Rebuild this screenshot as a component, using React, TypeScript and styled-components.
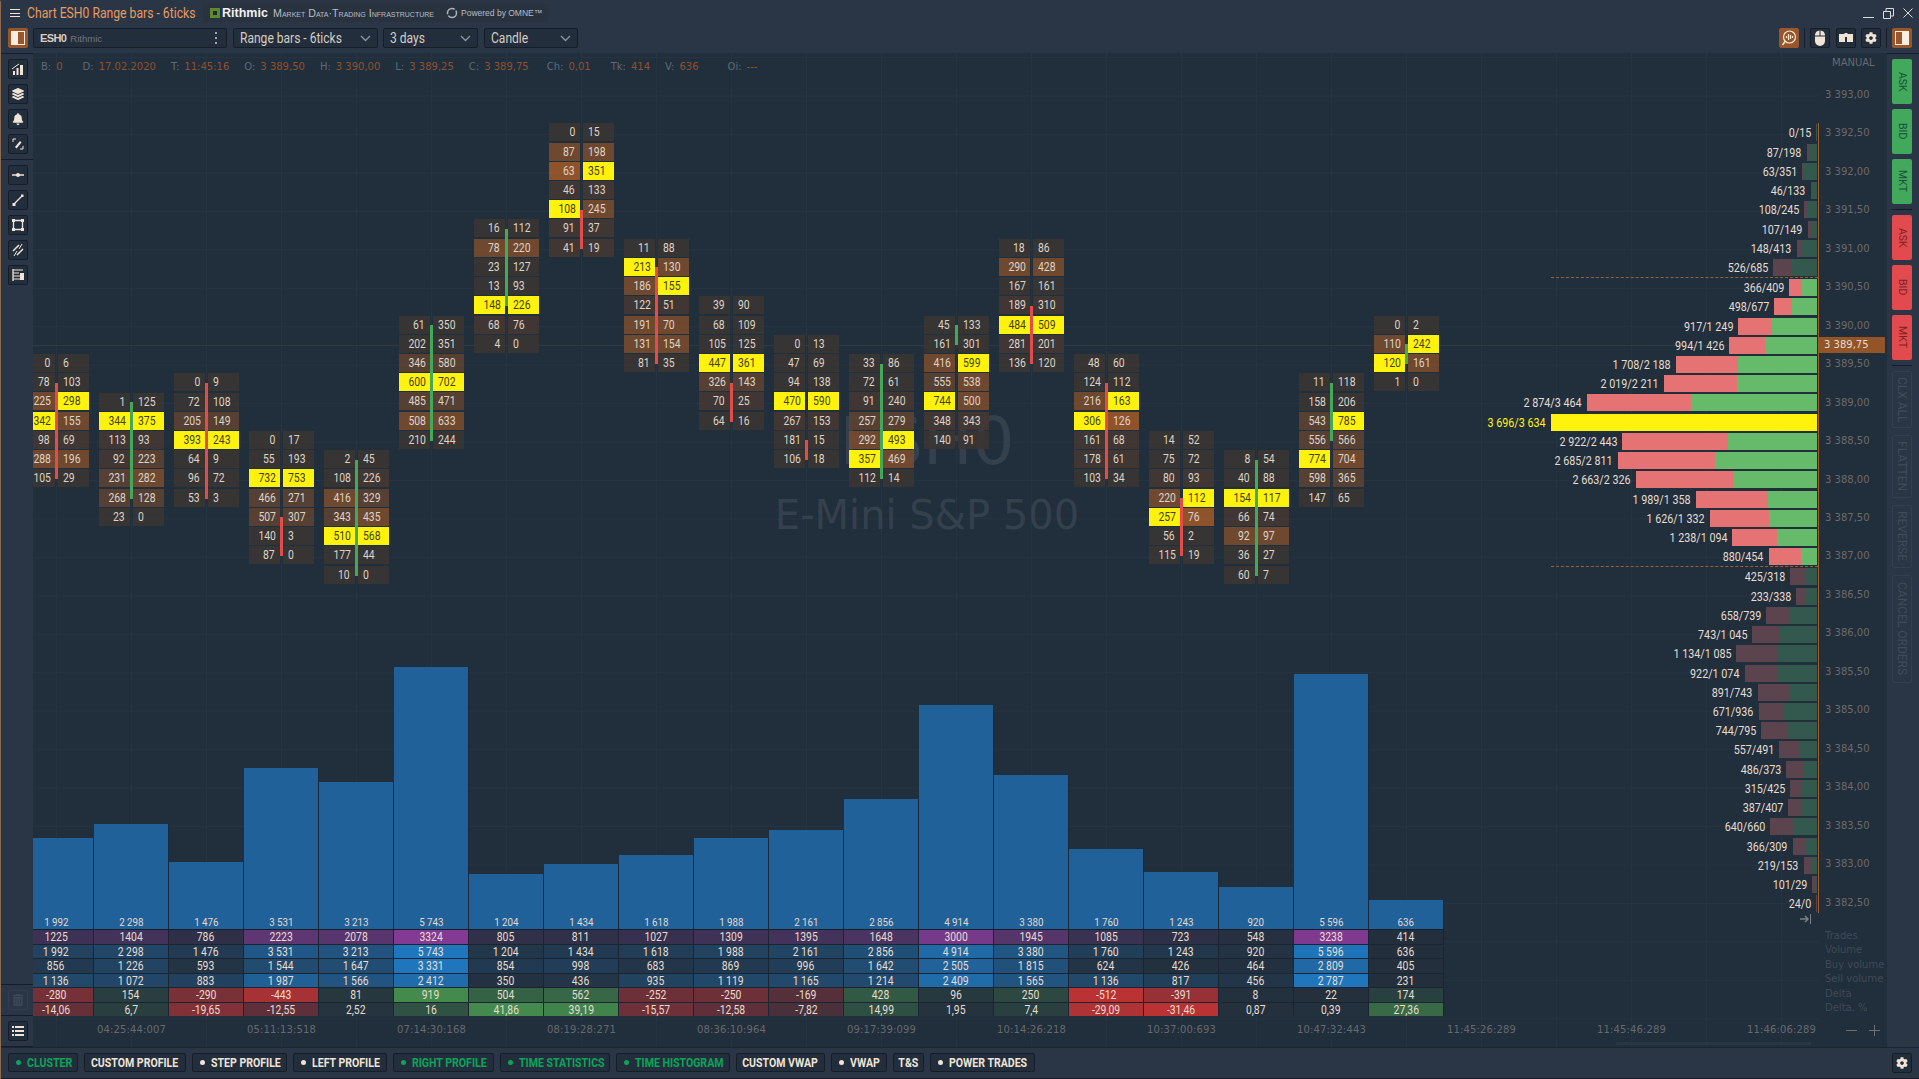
import * as React from 'react';
import styled, { createGlobalStyle } from 'styled-components';
import { FaBell, FaCog, FaLayerGroup, FaTrashAlt } from 'react-icons/fa';

const narrow = 'Roboto, "Liberation Sans", sans-serif';
const wide = '"DejaVu Sans", Verdana, sans-serif';

const PRICE_STEP = 19.23;
const CREAM = '#efe3d6';

const GlobalStyle = createGlobalStyle`
    html, body {
        margin: 0;
        padding: 0;
        background: #212e3c;
        overflow: hidden;
    }
    * {
        box-sizing: border-box;
    }
`;

const Window = styled.div`
    width: 1919px;
    height: 1079px;
    display: flex;
    flex-direction: column;
    overflow: hidden;
    background: #2a3645;
    border-top: 2px solid #2a3645;
    border-left: 1px solid #8a6a52;
    position: relative;
    font-family: ${narrow};
    &::before {
        content: '';
        position: absolute;
        left: 0;
        right: 0;
        top: -1px;
        height: 1px;
        background: #8a6a52;
    }
`;

// the reference uses a condensed face that is not installed, so Roboto is squeezed sideways
const Squeeze = styled.span<{ $from?: 'left' | 'right' | 'center'; $x?: number }>`
    display: inline-block;
    white-space: nowrap;
    transform: scaleX(${p => p.$x || 0.83});
    transform-origin: ${p => p.$from || 'center'} center;
`;

const Header = styled.div`
    height: 51px;
    flex: none;
    display: flex;
    flex-direction: column;
`;

const TitleRow = styled.div`
    height: 22px;
    flex: none;
    display: flex;
    align-items: center;
    padding-left: 9px;
`;

const Burger = styled.div`
    width: 10px;
    height: 8px;
    border-top: 1px solid ${CREAM};
    border-bottom: 1px solid ${CREAM};
    position: relative;
    &::after {
        content: '';
        position: absolute;
        left: 0;
        right: 0;
        top: 2.5px;
        height: 1px;
        background: ${CREAM};
    }
`;

const Title = styled.div`
    margin-left: 7px;
    width: 176px;
    font-size: 14px;
    color: #e89a62;
    white-space: nowrap;
`;

const Banner = styled.div`
    width: 345px;
    height: 18px;
    display: flex;
    align-items: center;
    background: #293340;
    border-radius: 2px;
    padding-left: 7px;
    color: #b7bdc4;
    white-space: nowrap;
    font-family: "Liberation Sans", sans-serif;
`;

const BannerBrand = styled.span`
    font-weight: 700;
    font-size: 12.5px;
    color: #f2f2f2;
    margin-left: 2px;
    width: 51px;
`;

const BannerSmall = styled.span`
    font-variant: small-caps;
    font-size: 10.7px;
    width: 173px;
`;

const BannerPower = styled.span`
    font-size: 8.5px;
    margin-left: 3px;
`;

const WindowControls = styled.div`
    margin-left: auto;
    display: flex;
    align-items: center;
    gap: 9px;
    padding-right: 6px;
    svg {
        display: block;
    }
`;

const ToolRow = styled.div`
    flex: 1;
    display: flex;
    align-items: flex-start;
    padding: 4px 0 0 7px;
`;

const Toggle = styled.div<{ $mirror?: boolean }>`
    width: 20px;
    height: 20px;
    background: #97562b;
    border-radius: 2px;
    flex: none;
    display: flex;
    align-items: center;
    justify-content: center;
    &::after {
        content: '';
        width: 12px;
        height: 12px;
        border: 1px solid #fbeee0;
        background: ${p => p.$mirror
            ? 'linear-gradient(90deg, #97562b 50%, #fbeee0 50%)'
            : 'linear-gradient(90deg, #fbeee0 50%, #97562b 50%)'};
    }
`;

const Box = styled.div<{ $w: number; $ml: number }>`
    width: ${p => p.$w}px;
    margin-left: ${p => p.$ml}px;
    height: 20px;
    flex: none;
    display: flex;
    align-items: center;
    padding: 0 6px;
    background: #222e3c;
    border: 1px solid #151e28;
    border-radius: 2px;
    color: #d8cdc0;
    font-size: 14px;
    white-space: nowrap;
`;

const Symbol = styled.span`
    font-size: 11px;
    font-weight: 700;
    letter-spacing: -0.6px;
    font-family: "Liberation Sans", sans-serif;
    color: #d8cdc0;
`;

const Feed = styled.span`
    font-size: 9.5px;
    margin-left: 4px;
    color: #6d7681;
    flex: 1;
    font-family: "Liberation Sans", sans-serif;
`;

const Chevron = styled.svg`
    margin-left: auto;
    flex: none;
`;

const Dots = styled.div`
    width: 2px;
    height: 12px;
    margin-right: 3px;
    background: repeating-linear-gradient(#a0a6ad 0 2px, transparent 2px 5px);
`;

const ToolGroup = styled.div`
    margin-left: auto;
    padding-right: 7px;
    display: flex;
    align-items: flex-start;
`;

const Divider = styled.div`
    width: 1px;
    height: 20px;
    background: #151e28;
    margin: 0 5px;
`;

const ToolGap = styled.div<{ $w: number }>`
    width: ${p => p.$w}px;
    flex: none;
`;

const IconButton = styled.div<{ $brown?: boolean; $dim?: boolean }>`
    width: 20px;
    height: 20px;
    flex: none;
    display: flex;
    align-items: center;
    justify-content: center;
    background: ${p => (p.$brown ? '#97562b' : p.$dim ? 'transparent' : '#222e3c')};
    border: 1px solid ${p => (p.$brown ? '#97562b' : p.$dim ? '#323f4e' : '#151e28')};
    border-radius: 2px;
    color: ${p => (p.$dim ? '#3c4855' : '#f1e4d6')};
    font-size: 12px;
`;

const Body = styled.div`
    height: 994px;
    flex: none;
    display: flex;
`;

const Rail = styled.div`
    width: 32px;
    flex: none;
    display: flex;
    flex-direction: column;
    border-top: 1px solid #151e28;
`;

const RailGroup = styled.div<{ $border?: boolean }>`
    display: flex;
    flex-direction: column;
    gap: 5px;
    padding: 5px 0 5px 7px;
    border-bottom: ${p => (p.$border ? '1px solid #151e28' : 'none')};
`;

const RailSpacer = styled.div`
    flex: 1;
    border-bottom: 1px solid #151e28;
`;

const Main = styled.div`
    width: 1786px;
    flex: none;
    display: flex;
    flex-direction: column;
    position: relative;
    overflow: hidden;
    background-color: #212e3c;
    background-image:
        linear-gradient(#2f3a44, #2f3a44),
        linear-gradient(90deg, #263340 1px, transparent 1px),
        linear-gradient(#263340 1px, transparent 1px);
    background-repeat: no-repeat, repeat, repeat;
    background-size: 100% 1px, 75px 100%, 100% 38.46px;
    background-position: 0 292px, 23px 0, 0 4px;
`;

const Watermark = styled.div`
    position: absolute;
    left: 0;
    right: 0;
    top: 356px;
    width: 1788px;
    text-align: center;
    font-family: ${wide};
    color: #35404d;
    line-height: 1;
`;

const WatermarkBig = styled.div`
    font-size: 66px;
`;

const WatermarkSmall = styled.div`
    font-size: 40px;
    margin-top: 20px;
`;

const InfoBar = styled.div`
    height: 70.3px;
    flex: none;
    display: flex;
    align-items: flex-start;
    gap: 15px;
    padding: 7px 0 0 8px;
    font-family: ${wide};
    font-size: 10px;
    line-height: 14px;
    white-space: nowrap;
    position: relative;
`;

const InfoItem = styled.div<{ $extra?: number }>`
    margin-right: ${p => p.$extra || 0}px;
    color: #5c6a79;
    span {
        color: #8d5230;
        margin-left: 5px;
    }
`;

const ChartBody = styled.div`
    flex: 1;
    display: flex;
    min-height: 0;
    position: relative;
`;

const LeftPane = styled.div`
    width: 1411px;
    flex: none;
    display: flex;
    flex-direction: column;
    overflow: hidden;
`;

const ClusterRow = styled.div`
    flex: 1;
    min-height: 0;
    display: flex;
    margin-left: -14px;
`;

const ClusterColumn = styled.div<{ $start: number }>`
    width: 75px;
    flex: none;
    align-self: flex-start;
    margin-top: ${p => p.$start * PRICE_STEP}px;
    padding: 0 5px;
    display: grid;
    grid-template-columns: 31px 31px;
    grid-auto-rows: 18px;
    column-gap: 3px;
    row-gap: ${PRICE_STEP - 18}px;
    position: relative;
`;

const Cell = styled.div<{ $level: number; $side: 'l' | 'r' }>`
    background: ${p => (p.$level === 9 ? '#fff30d' : ['#3a3533ea', '#443833ea', '#5b4232ea', '#774b2fea', '#96562bf0'][p.$level])};
    color: ${p => (p.$level === 9 ? '#3f3f18' : '#ddd3c7')};
    font-size: 13px;
    line-height: 18px;
    text-align: ${p => (p.$side === 'l' ? 'right' : 'left')};
    padding: 0 5px;
    white-space: nowrap;
`;

const Wick = styled.div<{ $from: number; $to: number; $up: boolean }>`
    position: absolute;
    left: 36px;
    width: 3px;
    top: ${p => p.$from * PRICE_STEP + 9.5}px;
    height: ${p => (p.$to - p.$from) * PRICE_STEP + 0.5}px;
    background: ${p => (p.$up ? '#43a85a' : '#e14d4d')};
`;

const VolumeRow = styled.div`
    height: 263px;
    flex: none;
    display: flex;
    align-items: flex-end;
    margin-left: -14px;
    border-bottom: 1px solid #16202b;
`;

const VolumeBar = styled.div<{ $h: number }>`
    width: 75px;
    flex: none;
    height: ${p => p.$h}px;
    border-right: 1px solid #1b2a3a;
    background: #21619a;
    display: flex;
    align-items: flex-end;
    justify-content: center;
    color: #e2d8cc;
    font-size: 11.5px;
    line-height: 14px;
`;

const StatsTable = styled.div`
    flex: none;
    margin-left: -14px;
    display: grid;
    grid-template-columns: repeat(19, 74px);
    grid-auto-rows: 13.5px;
    gap: 1px;
    background: #1a2531;
    height: 86px;
    width: 1425px;
`;

const StatCell = styled.div<{ $bg: string }>`
    background: ${p => p.$bg};
    color: #e6dccf;
    font-size: 12.5px;
    line-height: 13.5px;
    text-align: center;
    white-space: nowrap;
`;

const Profile = styled.div`
    flex: 1;
    display: flex;
    flex-direction: column;
    align-items: stretch;
`;

const ProfileRows = styled.div`
    display: flex;
    flex-direction: column;
    align-items: stretch;
    border-right: 1px solid #a0592a;
    padding-right: 1px;
`;

const ProfileRow = styled.div<{ $poc?: boolean }>`
    height: ${PRICE_STEP}px;
    display: flex;
    justify-content: flex-end;
    align-items: center;
    gap: 5px;
    font-size: 12.5px;
    color: ${p => (p.$poc ? '#fff30d' : '#e6dccf')};
    white-space: nowrap;
`;

const DashLine = styled.div`
    height: 0;
    width: 267px;
    align-self: flex-end;
    margin-right: -1px;
    border-top: 1px dashed #95603c;
`;

const ProfileBar = styled.div`
    height: 17px;
    display: flex;
    flex: none;
`;

const EndMark = styled.div`
    align-self: flex-end;
    margin: 0 8px 0 0;
    height: 12px;
    display: flex;
    align-items: center;
`;

const TimeAxis = styled.div`
    height: 31px;
    flex: none;
    display: flex;
    padding-left: 23.5px;
    position: relative;
`;

const TimeLabel = styled.div`
    width: 150px;
    flex: none;
    text-align: center;
    font-family: ${wide};
    font-size: 10px;
    letter-spacing: 0.15px;
    line-height: 28px;
    color: #666a6e;
`;

const ScrollThumb = styled.div`
    position: absolute;
    left: 1583px;
    width: 195px;
    bottom: 2px;
    height: 3px;
    background: #2a3645;
`;

const Axis = styled.div`
    width: 68px;
    flex: none;
    display: flex;
    flex-direction: column;
    position: relative;
    background: #212e3c;
    font-family: ${wide};
    font-size: 10px;
`;

const AxisMode = styled.div`
    height: 23px;
    flex: none;
    padding: 3px 0 0 13px;
    line-height: 14px;
    color: #666a6e;
`;

const PriceLabel = styled.div`
    height: 38.46px;
    flex: none;
    line-height: 38.46px;
    padding-left: 6px;
    color: #6d6a67;
    white-space: nowrap;
`;

const PriceTag = styled.div`
    position: absolute;
    left: 0;
    top: 284px;
    width: 66px;
    height: 16px;
    padding-left: 5px;
    line-height: 16px;
    background: #935428;
    color: #e6dccf;
`;

const AxisStats = styled.div`
    margin-top: 7px;
    display: grid;
    grid-auto-rows: 14.5px;
`;

const AxisStat = styled.div`
    padding-left: 6px;
    line-height: 14.5px;
    color: #3f4a55;
    white-space: nowrap;
`;

const Zoomers = styled.div`
    margin-top: 6px;
    padding: 0 7px 0 27px;
    display: flex;
    justify-content: space-between;
    align-items: center;
    height: 18px;
`;

const TradePanel = styled.div`
    flex: 1;
    display: flex;
    flex-direction: column;
    align-items: flex-start;
    padding: 5px 0 0 5px;
    border-top: 1px solid #151e28;
`;

const TradeButton = styled.div<{ $kind: 'buy' | 'sell' | 'idle'; $h: number }>`
    width: 20px;
    height: ${p => p.$h}px;
    flex: none;
    margin-bottom: ${p => (p.$kind === 'idle' ? 7 : 5)}px;
    border-radius: 2px;
    display: flex;
    align-items: center;
    justify-content: center;
    writing-mode: vertical-rl;
    white-space: nowrap;
    font-family: Roboto, sans-serif;
    font-size: ${p => (p.$kind === 'idle' ? 12 : 10.5)}px;
    background: ${p => (p.$kind === 'buy' ? '#42a85c' : p.$kind === 'sell' ? '#e24a4d' : 'transparent')};
    border: ${p => (p.$kind === 'idle' ? '1px solid #323f4e' : 'none')};
    color: ${p => (p.$kind === 'buy' ? '#17503a' : p.$kind === 'sell' ? '#7a2329' : '#3f4b58')};
`;

const TradeRule = styled.div`
    width: 20px;
    height: 1px;
    background: #151e28;
    flex: none;
    margin-bottom: 5px;
`;

const Footer = styled.div`
    flex: 1;
    display: flex;
    align-items: flex-start;
    gap: 6px;
    padding: 5px 7px 0 7px;
    border-top: 1px solid #1b2530;
    border-bottom: 1px solid #151e28;
    position: relative;
`;

const Chip = styled.div<{ $on?: boolean; $dot?: boolean; $w: number }>`
    width: ${p => p.$w}px;
    height: 19px;
    flex: none;
    display: flex;
    align-items: center;
    justify-content: ${p => (p.$dot ? 'flex-start' : 'center')};
    gap: 6px;
    padding-left: ${p => (p.$dot ? 7 : 0)}px;
    background: #222e3c;
    border: 1px solid #151e28;
    border-radius: 2px;
    color: ${p => (p.$on ? '#0ba45a' : CREAM)};
    font-size: 12px;
    font-weight: 700;
    white-space: nowrap;
    &::before {
        content: '';
        display: ${p => (p.$dot ? 'block' : 'none')};
        flex: none;
        width: 5px;
        height: 5px;
        border-radius: 50%;
        background: currentColor;
    }
`;

const FooterEnd = styled.div`
    margin-left: auto;
`;

const chevron = (
    <Chevron width="11" height="7" viewBox="0 0 11 7">
        <path d="M1 1l4.5 4.5L10 1" fill="none" stroke="#8c97a3" strokeWidth="1.3" />
    </Chevron>
);

const glyph = (children: React.ReactNode) => (
    <svg width="14" height="14" viewBox="0 0 14 14" fill="#f1e4d6" stroke="#f1e4d6">
        {children}
    </svg>
);

const railTop = [
    glyph(<g stroke="none"><path d="M2 9h2v4H2zM5.500 6h2v7h-2zM9 3h3v10H9z" /><path d="M1 7l4-3 3-2" fill="none" stroke="#f1e4d6" /></g>),
    <FaLayerGroup key="l" />,
    <FaBell key="b" />,
    glyph(<g><path d="M4 10l5-6 1.500 1.500-5 6z" stroke="none" /><path d="M2 5V2h3M12 9v3H9" fill="none" /></g>),
];

const railDraw = [
    glyph(<g><path d="M1 7h12" strokeWidth="1.5" /><circle cx="7" cy="7" r="2" stroke="none" /></g>),
    glyph(<g><path d="M3 11l8-8" strokeWidth="1.300" /><path d="M1.500 10h3v3h-3zM10 1.500h2.500v2.500H10z" stroke="none" /></g>),
    glyph(<g><path d="M2.500 2.500h9v9h-9z" fill="none" strokeWidth="1.300" /><path d="M1 1h3v3H1zM10 1h3v3h-3zM1 10h3v3H1zM10 10h3v3h-3z" stroke="none" /></g>),
    glyph(<g><path d="M2 8l6-6M6 12l6-6" strokeWidth="1.500" /><path d="M3 13l3-5M8 6l3-5" strokeWidth="1" /></g>),
    glyph(<g><path d="M2 1v12" strokeWidth="1.300" /><path d="M2 2h10M2 5h6M2 8h10M2 11h7" fill="none" /><path d="M9 5h4v7H9z" stroke="none" /></g>),
];

const listIcon = (
    <svg width="12" height="10" viewBox="0 0 12 10" fill="#f1e4d6">
        <path d="M0 0h2v2H0zM3 0h9v2H3zM0 4h2v2H0zM3 4h9v2H3zM0 8h2v2H0zM3 8h9v2H3z" />
    </svg>
);

const topIcons = {
    chat: (
        <svg width="16" height="16" viewBox="0 0 16 16" fill="none" stroke="#f7ead9">
            <circle cx="8.500" cy="7" r="6" strokeWidth="1.200" />
            <path d="M4 11.500L1.500 15" strokeWidth="1.500" />
            <path d="M5.500 8V6M7.500 10V4M9.500 9V5M11.500 8V6" strokeWidth="1.200" />
        </svg>
    ),
    mouse: (
        <svg width="12" height="16" viewBox="0 0 12 16" fill="#f1e4d6">
            <path d="M1 6.500h10V11a5 5 0 0 1-10 0zM1 5.500V5a5 5 0 0 1 4.500-4.500v5zM6.500.5A5 5 0 0 1 11 5v.5H6.500z" />
        </svg>
    ),
    split: (
        <svg width="14" height="10" viewBox="0 0 14 10" fill="#f1e4d6">
            <path d="M0 1h6v8H0zM8 1h6v8H8zM5.500 0h3v4h-3z" />
        </svg>
    ),
};

const ringIcon = (
    <svg width="12" height="12" viewBox="0 0 12 12" fill="none" stroke="#aeb5bd" strokeWidth="1.500">
        <circle cx="6" cy="6" r="4.500" strokeDasharray="11 1.500" />
    </svg>
);

const brandIcon = (
    <svg width="10" height="10" viewBox="0 0 10 10">
        <path d="M0 0h10v10H0z" fill="#5d8a2c" />
        <path d="M3 3h4v4H3z" fill="#202a36" />
    </svg>
);

const clusters: { start: number; up: boolean; wick: [number, number]; rows: number[][] }[] = [
    { start: 12, up: false, wick: [1, 6], rows: [[0, 6, 0, 0], [78, 103, 0, 0], [225, 298, 3, 9], [342, 155, 9, 3], [98, 69, 1, 1], [288, 196, 3, 3], [105, 29, 0, 0]] },
    { start: 14, up: true, wick: [0, 5], rows: [[1, 125, 0, 0], [344, 375, 9, 9], [113, 93, 1, 1], [92, 223, 1, 2], [231, 282, 2, 3], [268, 128, 2, 2], [23, 0, 0, 0]] },
    { start: 13, up: false, wick: [0, 6], rows: [[0, 9, 0, 0], [72, 108, 0, 0], [205, 149, 2, 2], [393, 243, 9, 9], [64, 9, 0, 0], [96, 72, 0, 0], [53, 3, 0, 0]] },
    { start: 16, up: false, wick: [4, 6], rows: [[0, 17, 0, 0], [55, 193, 0, 0], [732, 753, 9, 9], [466, 271, 2, 2], [507, 307, 2, 2], [140, 3, 0, 0], [87, 0, 0, 0]] },
    { start: 17, up: true, wick: [0, 6], rows: [[2, 45, 0, 0], [108, 226, 0, 1], [416, 329, 3, 2], [343, 435, 2, 3], [510, 568, 9, 9], [177, 44, 0, 0], [10, 0, 0, 0]] },
    { start: 10, up: true, wick: [0, 6], rows: [[61, 350, 0, 0], [202, 351, 0, 0], [346, 580, 2, 2], [600, 702, 9, 9], [485, 471, 2, 2], [508, 633, 3, 3], [210, 244, 0, 0]] },
    { start: 5, up: true, wick: [0, 4], rows: [[16, 112, 0, 0], [78, 220, 3, 3], [23, 127, 0, 0], [13, 93, 0, 0], [148, 226, 9, 9], [68, 76, 1, 1], [4, 0, 0, 0]] },
    { start: 0, up: false, wick: [4, 6], rows: [[0, 15, 0, 0], [87, 198, 3, 3], [63, 351, 4, 9], [46, 133, 1, 1], [108, 245, 9, 3], [91, 37, 1, 1], [41, 19, 1, 1]] },
    { start: 6, up: false, wick: [1, 6], rows: [[11, 88, 0, 0], [213, 130, 9, 3], [186, 155, 3, 9], [122, 51, 1, 1], [191, 70, 3, 3], [131, 154, 3, 3], [81, 35, 0, 0]] },
    { start: 9, up: false, wick: [4, 6], rows: [[39, 90, 0, 0], [68, 109, 0, 0], [105, 125, 0, 0], [447, 361, 9, 9], [326, 143, 2, 2], [70, 25, 1, 1], [64, 16, 0, 0]] },
    { start: 11, up: false, wick: [5, 6], rows: [[0, 13, 0, 0], [47, 69, 0, 0], [94, 138, 0, 0], [470, 590, 9, 9], [267, 153, 1, 1], [181, 15, 0, 0], [106, 18, 0, 0]] },
    { start: 12, up: true, wick: [0, 6], rows: [[33, 86, 0, 0], [72, 61, 0, 0], [91, 240, 1, 1], [257, 279, 2, 2], [292, 493, 3, 9], [357, 469, 9, 3], [112, 14, 0, 0]] },
    { start: 10, up: true, wick: [0, 1], rows: [[45, 133, 0, 0], [161, 301, 0, 0], [416, 599, 3, 9], [555, 538, 2, 3], [744, 500, 9, 3], [348, 343, 1, 1], [140, 91, 0, 0]] },
    { start: 6, up: false, wick: [3, 6], rows: [[18, 86, 0, 0], [290, 428, 3, 3], [167, 161, 0, 0], [189, 310, 1, 1], [484, 509, 9, 9], [281, 201, 1, 1], [136, 120, 0, 0]] },
    { start: 12, up: false, wick: [1, 6], rows: [[48, 60, 0, 0], [124, 112, 0, 0], [216, 163, 3, 9], [306, 126, 9, 4], [161, 68, 1, 1], [178, 61, 1, 1], [103, 34, 0, 0]] },
    { start: 16, up: false, wick: [3, 6], rows: [[14, 52, 0, 0], [75, 72, 0, 0], [80, 93, 1, 1], [220, 112, 3, 9], [257, 76, 9, 4], [56, 2, 0, 0], [115, 19, 0, 0]] },
    { start: 17, up: true, wick: [0, 6], rows: [[8, 54, 0, 0], [40, 88, 0, 0], [154, 117, 9, 9], [66, 74, 1, 1], [92, 97, 3, 3], [36, 27, 0, 0], [60, 7, 0, 0]] },
    { start: 13, up: true, wick: [0, 3], rows: [[11, 118, 0, 0], [158, 206, 0, 0], [543, 785, 2, 9], [556, 566, 2, 2], [774, 704, 9, 3], [598, 365, 2, 2], [147, 65, 0, 0]] },
    { start: 10, up: true, wick: [1, 2], rows: [[0, 2, 0, 0], [110, 242, 3, 9], [120, 161, 9, 3], [1, 0, 0, 0]] },
];

const trades = [1225, 1404, 786, 2223, 2078, 3324, 805, 811, 1027, 1309, 1395, 1648, 3000, 1945, 1085, 723, 548, 3238, 414];
const volumes = [1992, 2298, 1476, 3531, 3213, 5743, 1204, 1434, 1618, 1988, 2161, 2856, 4914, 3380, 1760, 1243, 920, 5596, 636];
const buys = [856, 1226, 593, 1544, 1647, 3331, 854, 998, 683, 869, 996, 1642, 2505, 1815, 624, 426, 464, 2809, 405];
const sells = [1136, 1072, 883, 1987, 1566, 2412, 350, 436, 935, 1119, 1165, 1214, 2409, 1565, 1136, 817, 456, 2787, 231];
const deltas = [-280, 154, -290, -443, 81, 919, 504, 562, -252, -250, -169, 428, 96, 250, -512, -391, 8, 22, 174];
const deltaPct = [-14.06, 6.7, -19.65, -12.55, 2.52, 16, 41.86, 39.19, -15.57, -12.58, -7.82, 14.99, 1.95, 7.4, -29.09, -31.46, 0.87, 0.39, 27.36];

const profile: [number, number][] = [
    [0, 15], [87, 198], [63, 351], [46, 133], [108, 245], [107, 149], [148, 413], [526, 685],
    [366, 409], [498, 677], [917, 1249], [994, 1426], [1708, 2188], [2019, 2211], [2874, 3464], [3696, 3634],
    [2922, 2443], [2685, 2811], [2663, 2326], [1989, 1358], [1626, 1332], [1238, 1094], [880, 454],
    [425, 318], [233, 338], [658, 739], [743, 1045], [1134, 1085], [922, 1074], [891, 743], [671, 936],
    [744, 795], [557, 491], [486, 373], [315, 425], [387, 407], [640, 660], [366, 309], [219, 153], [101, 29], [24, 0],
];

const prices = ['3 393,00', '3 392,50', '3 392,00', '3 391,50', '3 391,00', '3 390,50', '3 390,00', '3 389,50', '3 389,00', '3 388,50', '3 388,00', '3 387,50', '3 387,00', '3 386,50', '3 386,00', '3 385,50', '3 385,00', '3 384,50', '3 384,00', '3 383,50', '3 383,00', '3 382,50'];
const times = ['04:25:44:007', '05:11:13:518', '07:14:30:168', '08:19:28:271', '08:36:10:964', '09:17:39:099', '10:14:26:218', '10:37:00:693', '10:47:32:443', '11:45:26:289', '11:45:46:289', '11:46:06:289'];

const chips = [
    { t: 'CLUSTER', on: true, dot: true, w: 70 },
    { t: 'CUSTOM PROFILE', w: 102 },
    { t: 'STEP PROFILE', dot: true, w: 95 },
    { t: 'LEFT PROFILE', dot: true, w: 94 },
    { t: 'RIGHT PROFILE', on: true, dot: true, w: 101 },
    { t: 'TIME STATISTICS', on: true, dot: true, w: 110 },
    { t: 'TIME HISTOGRAM', on: true, dot: true, w: 114 },
    { t: 'CUSTOM VWAP', w: 89 },
    { t: 'VWAP', dot: true, w: 56 },
    { t: 'T&S', w: 31 },
    { t: 'POWER TRADES', dot: true, w: 105 },
];

const info = [
    ['B:', '0', 5], ['D:', '17.02.2020'], ['T:', '11:45:16'], ['O:', '3 389,50'], ['H:', '3 390,00'],
    ['L:', '3 389,25'], ['C:', '3 389,75', 3], ['Ch:', '0,01', 5], ['Tk:', '414'], ['V:', '636', 14], ['Oi:', '---'],
] as [string, string, number?][];

const group = (n: number) => String(n).replace(/\B(?=(\d{3})+$)/, ' ');
const comma = (n: number) => String(n).replace('.', ',');

const mix = (from: number[], to: number[], t: number) =>
    `rgb(${from.map((c, i) => Math.round(c + (to[i] - c) * t)).join(',')})`;

const BASE = [35, 47, 61];
const ramp = (values: number[], to: number[]) => {
    const min = Math.min(...values);
    const max = Math.max(...values);
    return values.map(v => mix(BASE, to, (v - min) / (max - min)));
};
const signed = (values: number[]) => {
    const top = Math.max(...values);
    const low = Math.min(...values);
    return values.map(v =>
        v >= 0 ? mix(BASE, [67, 138, 76], v / top) : mix(BASE, [186, 50, 52], v / low));
};

const statRows: { labels: string[]; colors: string[] }[] = [
    { labels: trades.map(String), colors: ramp(trades, [130, 58, 146]) },
    { labels: volumes.map(group), colors: ramp(volumes, [31, 118, 189]) },
    { labels: buys.map(group), colors: ramp(buys, [31, 118, 189]) },
    { labels: sells.map(group), colors: ramp(sells, [31, 118, 189]) },
    { labels: deltas.map(String), colors: signed(deltas) },
    { labels: deltaPct.map(comma), colors: signed(deltaPct) },
];

const PROFILE_SCALE = 266 / (3696 + 3634);

const profileBar = (ask: number, bid: number, index: number) => {
    const bright = index >= 8 && index <= 22;
    const total = (ask + bid) * PROFILE_SCALE;
    if (ask === 3696) {
        return <ProfileBar style={{ width: total, background: '#fff30d' }} />;
    }
    return (
        <ProfileBar style={{ width: total }}>
            <div style={{ width: ask * PROFILE_SCALE, background: bright ? '#e57373' : '#5b444e' }} />
            <div style={{ width: bid * PROFILE_SCALE, background: bright ? '#66bb6a' : '#33594e' }} />
        </ProfileBar>
    );
};

export default function App() {
    return (
        <Window>
            <GlobalStyle />
            <Header>
                <TitleRow>
                    <Burger />
                    <Title><Squeeze $from="left" $x={0.87}>Chart ESH0 Range bars - 6ticks</Squeeze></Title>
                    <Banner>
                        {brandIcon}
                        <BannerBrand>Rithmic</BannerBrand>
                        <BannerSmall>Market Data·Trading Infrastructure</BannerSmall>
                        {ringIcon}
                        <BannerPower>Powered by OMNE™</BannerPower>
                    </Banner>
                    <WindowControls>
                        <svg width="11" height="10" viewBox="0 0 11 10"><path d="M0 9.500h11" stroke="#d8dde2" /></svg>
                        <svg width="11" height="11" viewBox="0 0 11 11" fill="none" stroke="#d8dde2"><path d="M.5 3.500h7v7h-7zM3 3V.5h7.500V8H8" /></svg>
                        <svg width="10" height="10" viewBox="0 0 10 10" stroke="#d8dde2"><path d="M.5.5l9 9M9.500.5l-9 9" /></svg>
                    </WindowControls>
                </TitleRow>
                <ToolRow>
                    <Toggle />
                    <Box $w={194} $ml={5}>
                        <Symbol>ESH0</Symbol>
                        <Feed>Rithmic</Feed>
                        <Dots />
                    </Box>
                    <Box $w={145} $ml={6}><Squeeze $from="left" $x={0.86}>Range bars - 6ticks</Squeeze>{chevron}</Box>
                    <Box $w={95} $ml={5}><Squeeze $from="left" $x={0.86}>3 days</Squeeze>{chevron}</Box>
                    <Box $w={94} $ml={6}><Squeeze $from="left" $x={0.86}>Candle</Squeeze>{chevron}</Box>
                    <ToolGroup>
                        <IconButton $brown>{topIcons.chat}</IconButton>
                        <Divider />
                        <IconButton>{topIcons.mouse}</IconButton>
                        <ToolGap $w={6} />
                        <IconButton>{topIcons.split}</IconButton>
                        <ToolGap $w={5} />
                        <IconButton><FaCog /></IconButton>
                        <Divider />
                        <Toggle $mirror />
                    </ToolGroup>
                </ToolRow>
            </Header>
            <Body>
                <Rail>
                    <RailGroup $border>
                        {railTop.map((icon, i) => <IconButton key={i}>{icon}</IconButton>)}
                    </RailGroup>
                    <RailGroup>
                        {railDraw.map((icon, i) => <IconButton key={i}>{icon}</IconButton>)}
                    </RailGroup>
                    <RailSpacer />
                    <RailGroup $border>
                        <IconButton $dim><FaTrashAlt /></IconButton>
                    </RailGroup>
                    <RailGroup $border>
                        <IconButton>{listIcon}</IconButton>
                    </RailGroup>
                </Rail>
                <Main>
                    <Watermark>
                        <WatermarkBig>ESH0</WatermarkBig>
                        <WatermarkSmall>E-Mini S&amp;P 500</WatermarkSmall>
                    </Watermark>
                    <InfoBar>
                        {info.map(([label, value, extra]) => (
                            <InfoItem key={label} $extra={extra}>{label}<span>{value}</span></InfoItem>
                        ))}
                    </InfoBar>
                    <ChartBody>
                        <LeftPane>
                            <ClusterRow>
                                {clusters.map((c, i) => (
                                    <ClusterColumn key={i} $start={c.start}>
                                        {c.rows.map((r, j) => (
                                            <React.Fragment key={j}>
                                                <Cell $side="l" $level={r[2]}><Squeeze $from="right" $x={0.8}>{r[0]}</Squeeze></Cell>
                                                <Cell $side="r" $level={r[3]}><Squeeze $from="left" $x={0.8}>{r[1]}</Squeeze></Cell>
                                            </React.Fragment>
                                        ))}
                                        <Wick $from={c.wick[0]} $to={c.wick[1]} $up={c.up} />
                                    </ClusterColumn>
                                ))}
                            </ClusterRow>
                            <VolumeRow>
                                {volumes.map((v, i) => (
                                    <VolumeBar key={i} $h={v * 262 / 5743}><Squeeze $x={0.85}>{group(v)}</Squeeze></VolumeBar>
                                ))}
                            </VolumeRow>
                            <StatsTable>
                                {statRows.map(row => row.labels.map((label, i) => (
                                    <StatCell key={`${row.colors[i]}${i}${label}`} $bg={row.colors[i]}><Squeeze>{label}</Squeeze></StatCell>
                                )))}
                            </StatsTable>
                        </LeftPane>
                        <Profile>
                            <ProfileRows>
                                {profile.map(([ask, bid], i) => (
                                    <React.Fragment key={i}>
                                        {(i === 8 || i === 23) && <DashLine />}
                                        <ProfileRow $poc={ask === 3696}>
                                            <Squeeze $from="right" $x={0.86}>{group(ask)}/{group(bid)}</Squeeze>
                                            {profileBar(ask, bid, i)}
                                        </ProfileRow>
                                    </React.Fragment>
                                ))}
                            </ProfileRows>
                            <EndMark>
                                <svg width="11" height="10" viewBox="0 0 11 10" fill="none" stroke="#7a7f85">
                                    <path d="M0 5h8M5 2l3 3-3 3" strokeWidth="1.500" />
                                    <path d="M10.500 0v10" />
                                </svg>
                            </EndMark>
                        </Profile>
                    </ChartBody>
                    <TimeAxis>
                        {times.map(t => <TimeLabel key={t}>{t}</TimeLabel>)}
                        <ScrollThumb />
                    </TimeAxis>
                </Main>
                <Axis>
                    <AxisMode>MANUAL</AxisMode>
                    {prices.map(p => <PriceLabel key={p}>{p}</PriceLabel>)}
                    <PriceTag>3 389,75</PriceTag>
                    <AxisStats>
                        {['Trades', 'Volume', 'Buy volume', 'Sell volume', 'Delta', 'Delta, %'].map(s => (
                            <AxisStat key={s}>{s}</AxisStat>
                        ))}
                    </AxisStats>
                    <Zoomers>
                        <svg width="11" height="11" viewBox="0 0 11 11"><path d="M0 5.500h11" stroke="#6a6f76" /></svg>
                        <svg width="11" height="11" viewBox="0 0 11 11"><path d="M0 5.500h11M5.500 0v11" stroke="#6a6f76" /></svg>
                    </Zoomers>
                </Axis>
                <TradePanel>
                    <TradeButton $kind="buy" $h={45}>ASK</TradeButton>
                    <TradeButton $kind="buy" $h={45}>BID</TradeButton>
                    <TradeButton $kind="buy" $h={45}>MKT</TradeButton>
                    <TradeRule />
                    <TradeButton $kind="sell" $h={45}>ASK</TradeButton>
                    <TradeButton $kind="sell" $h={45}>BID</TradeButton>
                    <TradeButton $kind="sell" $h={45}>MKT</TradeButton>
                    <TradeRule />
                    <TradeButton $kind="idle" $h={57}>CLX ALL</TradeButton>
                    <TradeButton $kind="idle" $h={63}>FLATTEN</TradeButton>
                    <TradeButton $kind="idle" $h={63}>REVERSE</TradeButton>
                    <TradeButton $kind="idle" $h={108}>CANCEL ORDERS</TradeButton>
                </TradePanel>
            </Body>
            <Footer>
                {chips.map(c => (
                    <Chip key={c.t} $on={c.on} $dot={c.dot} $w={c.w}>
                        <Squeeze $from={c.dot ? 'left' : 'center'} $x={0.88}>{c.t}</Squeeze>
                    </Chip>
                ))}
                <FooterEnd>
                    <IconButton><FaCog /></IconButton>
                </FooterEnd>
            </Footer>
        </Window>
    );
}
